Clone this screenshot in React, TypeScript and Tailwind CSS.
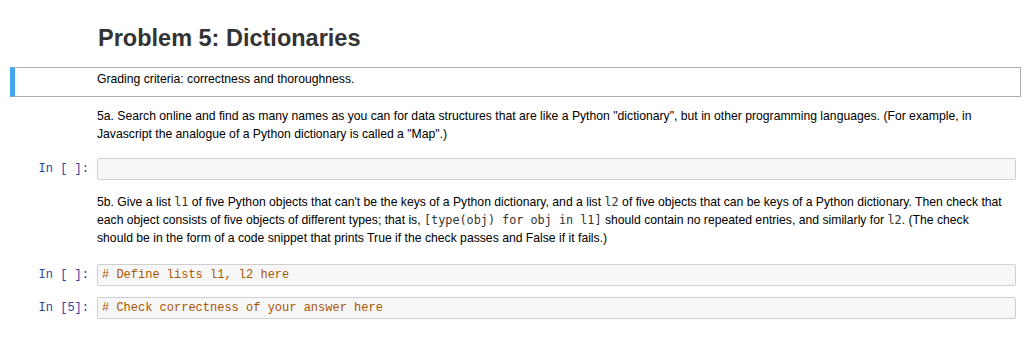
import React from "react";

const sans = "font-['Liberation_Sans',Arial,sans-serif]";
const mono = "font-['Liberation_Mono','Courier_New',monospace]";
const inlineMono = "font-['DejaVu_Sans_Mono',Menlo,monospace] text-[11.8px] text-[#333]";

const Prompt = ({ n }: { n?: string }) => (
  <div
    className={`w-[87px] shrink-0 pr-[8px] text-right text-[12px] leading-[22px] text-[#303f9f] whitespace-pre ${mono}`}
  >
    {`In [${n ?? " "}]:`}
  </div>
);

const CodeCell = ({ n, code, className }: { n?: string; code?: string; className?: string }) => (
  <div className={`flex pr-[5px] ${className ?? ""}`}>
    <Prompt n={n} />
    <div
      className={`h-[22px] flex-1 rounded-[2px] border border-[#cfcfcf] bg-[#f7f7f7] pl-[4px] text-[12px] leading-[20px] text-[#aa5500] whitespace-pre ${mono}`}
    >
      {code}
    </div>
  </div>
);

const Md = ({ children, className }: { children: React.ReactNode; className?: string }) => (
  <div className={`flex pr-[5px] ${className ?? ""}`}>
    <div className="w-[87px] shrink-0" />
    <div className="flex-1 text-[12.2px] leading-[18px] text-black">{children}</div>
  </div>
);

const C = ({ children }: { children: React.ReactNode }) => (
  <code className={inlineMono}>{children}</code>
);

export default function App() {
  return (
    <div className={`h-[344px] w-[1024px] overflow-hidden bg-white pl-[10px] pr-[3px] ${sans}`}>
      <h1 className="ml-[88px] pt-[24px] text-[23.5px] font-bold leading-[28px] text-[#333]">
        Problem 5: Dictionaries
      </h1>

      <div className="mt-[15px] flex border border-l-[5px] border-[#ababab] border-l-[#42a5f5] pr-[4px]">
        <div className="w-[82px] shrink-0" />
        <div className="flex-1 pt-[2px] pb-[8px] text-[12.2px] leading-[18px] text-black">
          Grading criteria: correctness and thoroughness.
        </div>
      </div>

      <Md className="mt-[10px]">
        5a. Search online and find as many names as you can for data structures that are like a Python
        "dictionary", but in other programming languages. (For example, in Javascript the analogue of a
        Python dictionary is called a "Map".)
      </Md>

      <CodeCell className="mt-[15px]" />

      <Md className="mt-[13px]">
        5b. Give a list <C>l1</C> of five Python objects that can't be the keys of a Python dictionary,
        and a list <C>l2</C> of five objects that can be keys of a Python dictionary. Then check that
        each object consists of five objects of different types; that is,{" "}
        <C>[type(obj) for obj in l1]</C> should contain no repeated entries, and similarly for{" "}
        <C>l2</C>. (The check
        <br />
        should be in the form of a code snippet that prints True if the check passes and False if it
        fails.)
      </Md>

      <CodeCell className="mt-[17px]" code="# Define lists l1, l2 here" />
      <CodeCell className="mt-[11px]" n="5" code="# Check correctness of your answer here" />
    </div>
  );
}
